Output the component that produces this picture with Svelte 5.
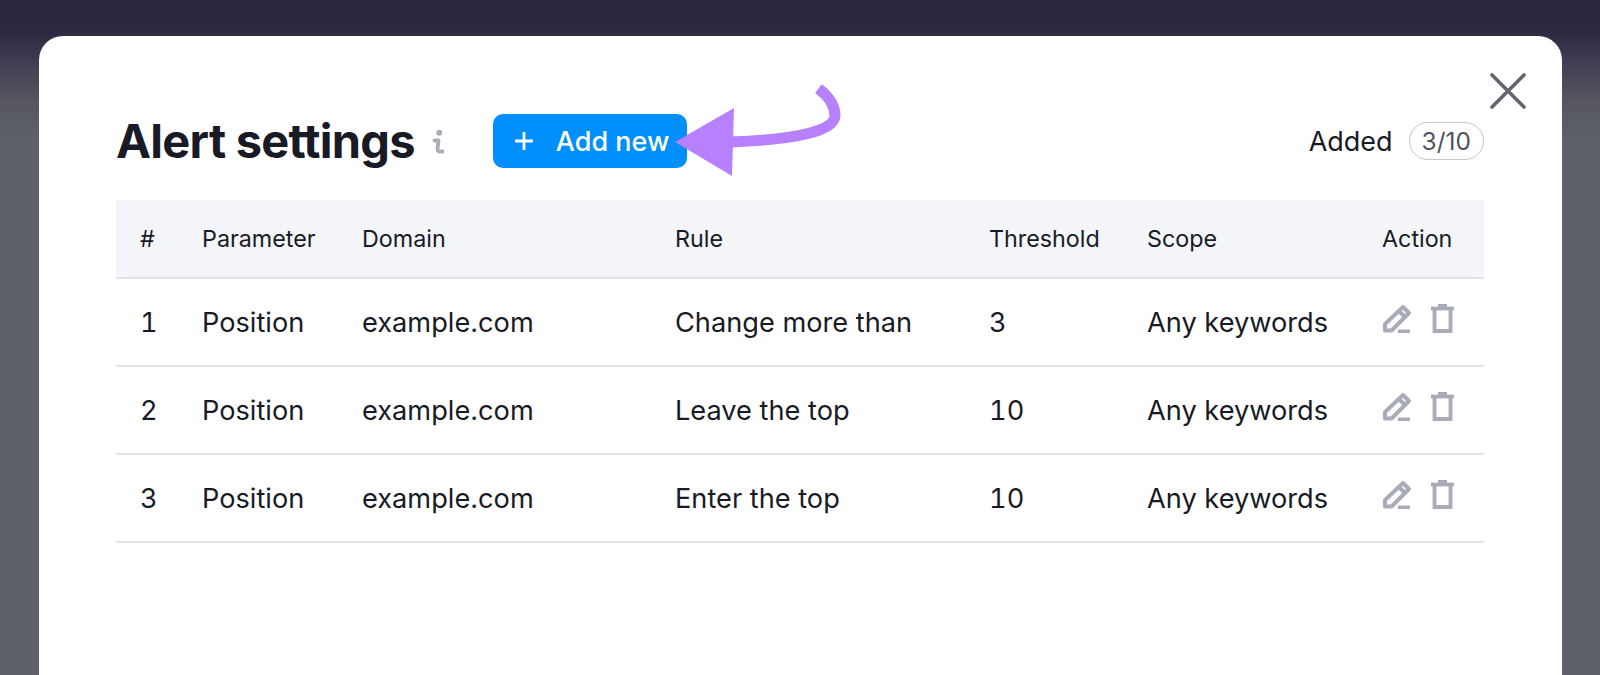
<script>
  const rows = [
    { id: 1, rule: "Change more than", threshold: 3 },
    { id: 2, rule: "Leave the top", threshold: 10 },
    { id: 3, rule: "Enter the top", threshold: 10 },
  ];
  const headers = ["#", "Parameter", "Domain", "Rule", "Threshold", "Scope", "Action"];
</script>

<div class="page">
  <div class="modal">
    <button class="close" aria-label="Close">
      <svg width="36" height="36" viewBox="0 0 36 36">
        <path d="M2 2L34 34M34 2L2 34" stroke="#62656e" stroke-width="3.6" stroke-linecap="round" />
      </svg>
    </button>

    <div class="head">
      <h1>Alert settings</h1>
      <svg class="info" width="14" height="26" viewBox="0 0 14 26">
        <circle cx="8.300" cy="3.700" r="3" fill="#a9acb8" />
        <path d="M3.500 11.500H7.500L6.500 20Q6.300 22.500 8.500 22.500H11.500" fill="none" stroke="#a9acb8" stroke-width="3.800" stroke-linecap="round" stroke-linejoin="round" />
      </svg>
      <button class="add">
        <svg width="20" height="20" viewBox="0 0 20 20">
          <path d="M10 1V19M1 10H19" stroke="#fff" stroke-width="2.800" />
        </svg>
        <span>Add new</span>
      </button>
      <div class="added">
        <span>Added</span>
        <span class="count">3/10</span>
      </div>
    </div>

    <div class="table">
      <div class="row header">
        {#each headers as h}
          <div>{h}</div>
        {/each}
      </div>
      {#each rows as r}
        <div class="row">
          <div class="num">{r.id}</div>
          <div>Position</div>
          <div>example.com</div>
          <div>{r.rule}</div>
          <div class="num">{r.threshold}</div>
          <div>Any keywords</div>
          <div class="actions">
            <svg width="31" height="30" viewBox="0 0 31 30" fill="none" stroke="#a9acb8" stroke-width="4">
              <path d="M3 27.500V21L21 4L27 10L9.500 27.500Z" stroke-linejoin="round" />
              <path d="M17 8L23.500 14.500" />
              <path d="M16 28.500H28" />
            </svg>
            <svg width="23" height="29" viewBox="0 0 23 29" fill="none" stroke="#a9acb8" stroke-width="3.800">
              <path d="M0 4.500H23" />
              <path d="M7 1.500H16" />
              <path d="M3.500 4.500V27H19.500V4.500" />
            </svg>
          </div>
        </div>
      {/each}
    </div>

    <svg class="arrow" width="180" height="100" viewBox="0 0 180 100">
      <path d="M143.500 3.500Q160 16 160 31Q158 53 56 57" fill="none" stroke="#b780fe" stroke-width="11" />
      <path d="M0 57L59 23L57 91Z" fill="#b780fe" />
    </svg>
  </div>
</div>

<style>
  :global(body) {
    margin: 0;
    font-family: Inter, "Liberation Sans", sans-serif;
    color: #181b26;
  }

  .page {
    height: 675px;
    overflow: hidden;
    padding: 36px 38px 0 39px;
    box-sizing: border-box;
    background: linear-gradient(#29263e 0, #2b2840 30px, #3b3950 55px, #55565f 100px, #5f6169 140px, #5f6169 100%);
  }

  .modal {
    position: relative;
    height: 700px;
    background: #fff;
    border-radius: 24px 24px 0 0;
    padding: 78px 78px 0 77px;
    box-sizing: border-box;
  }

  .close {
    position: absolute;
    top: 37px;
    right: 36px;
    padding: 0;
    border: none;
    background: none;
    display: flex;
  }

  .head {
    display: flex;
    align-items: center;
    height: 54px;
    margin-bottom: 32px;
  }

  h1 {
    margin: 0;
    font-size: 47px;
    font-weight: 700;
    letter-spacing: -0.75px;
    line-height: 54px;
  }

  .info {
    margin-left: 16px;
    margin-top: 2px;
  }

  .add {
    display: flex;
    align-items: center;
    gap: 22px;
    height: 54px;
    margin-left: 48px;
    padding: 0 18px 0 21px;
    background: #008ffb;
    color: #fff;
    border: none;
    border-radius: 10px;
    font: 500 27px Inter, sans-serif;
  }

  .added {
    margin-left: auto;
    display: flex;
    align-items: center;
    gap: 16px;
    font-size: 27px;
  }

  .count {
    padding: 0 12px;
    height: 36px;
    line-height: 36px;
    border: 1.500px solid #c4c6ce;
    border-radius: 19px;
    color: #4f525d;
    font-size: 24.500px;
  }

  .row {
    display: grid;
    grid-template-columns: 86px 160px 313px 314px 158px 235px 1fr;
    align-items: center;
    height: 88px;
    box-sizing: border-box;
    border-bottom: 2px solid #e3e4ea;
    font-size: 27.200px;
  }

  .row > div:first-child {
    padding-left: 24px;
  }

  .num {
    font-variant-numeric: tabular-nums;
  }

  .header {
    height: 79px;
    background: #f4f5f9;
    font-size: 23.300px;
    border-bottom-color: #e1e2ee;
  }

  .actions {
    display: flex;
    align-items: center;
    gap: 18px;
    margin-top: -8px;
  }

  .arrow {
    position: absolute;
    left: 636px;
    top: 49px;
  }
</style>
